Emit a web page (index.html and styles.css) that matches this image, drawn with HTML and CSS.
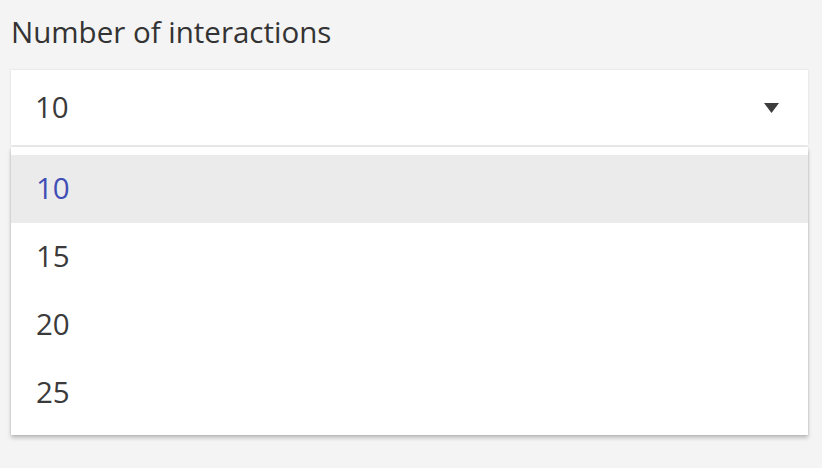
FILE: index.html
```html
<!DOCTYPE html>
<html lang="en">
<head>
<meta charset="utf-8">
<title>Number of interactions</title>
<link rel="stylesheet" href="styles.css">
</head>
<body>
<div class="field">
  <div class="label">Number of interactions</div>
  <div class="select">
    <span class="value">10</span>
    <svg class="arrow" width="15" height="10" viewBox="0 0 15 10"><polygon points="0,0 15,0 7.5,10" fill="#3d3d3d"/></svg>
  </div>
  <ul class="menu">
    <li class="item selected">10</li>
    <li class="item">15</li>
    <li class="item">20</li>
    <li class="item">25</li>
  </ul>
</div>
</body>
</html>
```
FILE: styles.css
```css
html, body {
  margin: 0;
  padding: 0;
  background: #f4f4f4;
}
body {
  font-family: "Open Sans", "Lato", sans-serif;
  color: #3a3a3a;
}
.field {
  padding: 14px 14px 24px 11px;
}
.label {
  font-size: 29.5px;
  line-height: 36px;
  color: #333333;
}
.select {
  margin-top: 20px;
  height: 75px;
  box-sizing: border-box;
  background: #ffffff;
  box-shadow: 0 0 2px rgba(0, 0, 0, 0.12);
  display: flex;
  align-items: center;
  justify-content: space-between;
  padding: 0 29px 2px 24px;
}
.value {
  font-size: 29.5px;
  color: #3a3a3a;
}
.arrow {
  display: block;
  margin-top: 2px;
}
.menu {
  list-style: none;
  margin: 2px 0 0 0;
  padding: 8px 0;
  background: #ffffff;
  box-shadow: 0 3px 4px rgba(0, 0, 0, 0.22), 0 0 2px rgba(0, 0, 0, 0.14);
}
.item {
  height: 68px;
  box-sizing: border-box;
  display: flex;
  align-items: center;
  padding: 0 0 4px 25px;
  font-size: 29.5px;
  color: #3a3a3a;
}
.item.selected {
  background: #ebebeb;
  color: #3f4fb5;
}
```
